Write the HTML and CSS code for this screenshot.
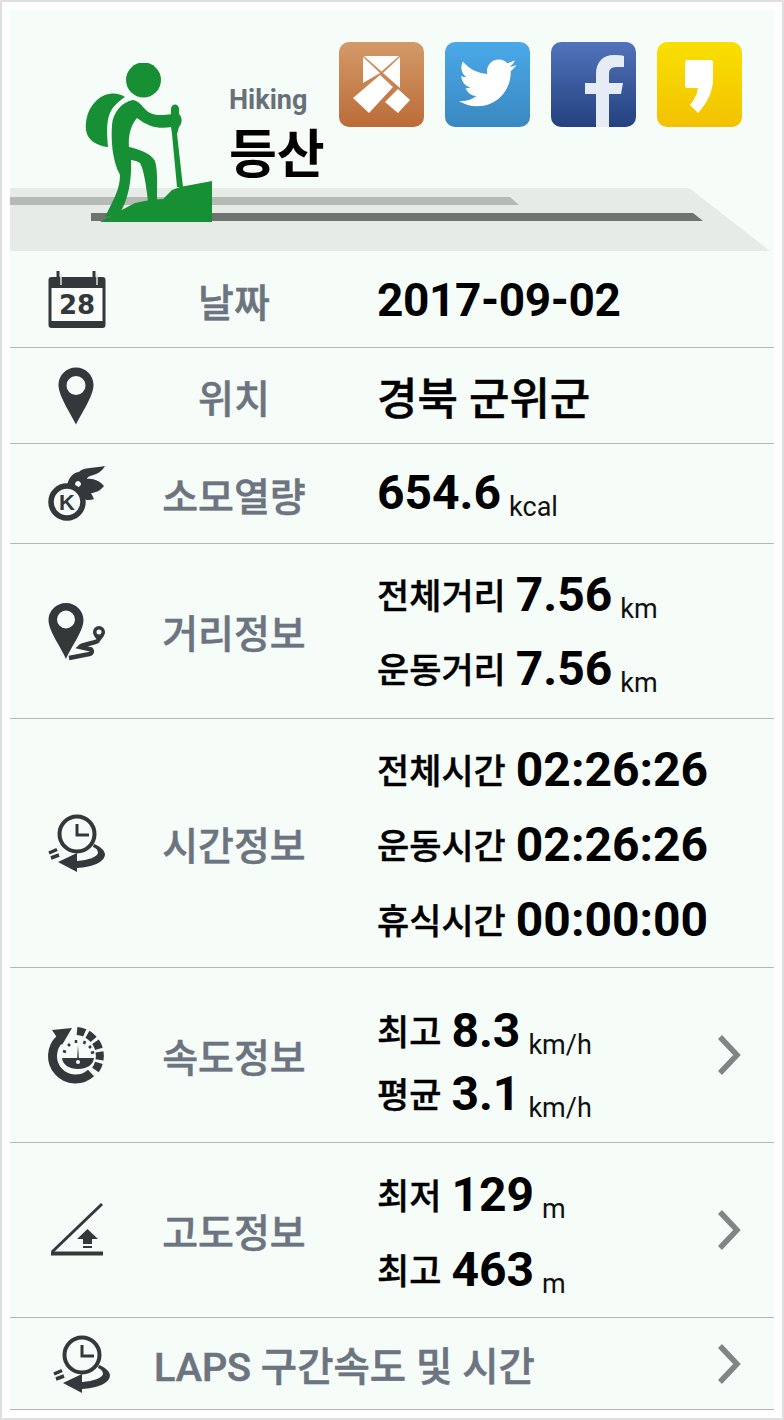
FILE: index.html
```html
<!DOCTYPE html>
<html lang="ko">
<head>
    <meta charset="UTF-8">
    <meta name="viewport" content="width=device-width, initial-scale=1.0">
    <title>등산 기록</title>
    <link rel="stylesheet" href="styles.css">
</head>
<body>
    <svg class="defs" width="0" height="0">
        <symbol id="clockIcon" viewBox="0 0 60 60">
            <circle cx="30" cy="21" r="17.5" fill="none" stroke="#33383a" stroke-width="4"/>
            <path d="M30 11V22H42" fill="none" stroke="#33383a" stroke-width="3"/>
            <path d="M47 31C52 33 57 36 58 41C58 49 46 54 30 55L30 59L11 49L30 40L30 48C42 47 50 44 51 40C51 37 49 35 46 34Z" fill="#33383a"/>
            <path d="M2 40L10 36.5M4 45L12 42" fill="none" stroke="#33383a" stroke-width="3.5"/>
        </symbol>
        <symbol id="chevron" viewBox="0 0 24 40">
            <path d="M3 2L20 20L3 38" fill="none" stroke="#808585" stroke-width="5.5"/>
        </symbol>
    </svg>

    <div class="frame">
        <div class="sheet">
            <!-- Header -->
            <header class="header">
                <svg class="road" width="764" height="64" viewBox="10 188 764 64">
                    <polygon points="10,188 689,188 770,251 10,251" fill="#e7ebe7"/>
                    <polygon points="10,197 510,197 519,205 10,205" fill="#b5bab4"/>
                    <polygon points="91,213 693,213 703,221 91,221" fill="#6e736e"/>
                </svg>
                <svg class="hiker" width="127" height="159" viewBox="85 63 127 159">
                    <circle cx="143.5" cy="80" r="17.5" fill="#178f35"/>
                    <path d="M125 97C118 92 106 92 97 100C88 108 85 120 86 130C87 140 97 146 108 147C107 135 106 122 110 113C113 106 119 101 125 97Z" fill="#178f35"/>
                    <path d="M133 100C139 101 142 106 146 110C151 115 158 116 172 114L172 127C160 129 150 128 137 118C131 125 128 135 129 147C137 149 150 152 155 161C158 170 157 190 157 201L148 201C146 185 144 170 140 163C135 160 131 160 131 160C132 180 128 200 120 213L105 217C113 200 120 190 120 175C112 160 111 140 112 125C113 112 122 102 133 100Z" fill="#178f35"/>
                    <path d="M171 109C171 103 179 103 179 109V114C183 118 182 124 179 127L177 134L183 187H177L172 134L171 127Z" fill="#178f35"/>
                    <path d="M100 222L118 212L135 203L150 200L163 199L172 190L180 187L212 181V222Z" fill="#178f35"/>
                </svg>
                <div class="title">
                    <div class="title-en">Hiking</div>
                    <div class="title-ko">등산</div>
                </div>
                <div class="share">
                    <svg class="share-icon share-band" width="85" height="85" viewBox="0 0 85 85">
                        <polygon points="25,14 60,14 42.5,29.5" fill="#fff"/>
                        <polygon points="24,15 24,41 41,31" fill="#fff"/>
                        <polygon points="61,15 61,46 44,31" fill="#fff"/>
                        <polygon points="14,56 41,33 54,45 30,71" fill="#fff"/>
                        <polygon points="59,47 71,58 59,71 46,60" fill="#fff"/>
                    </svg>
                    <svg class="share-icon share-twitter" width="85" height="85" viewBox="0 0 85 85">
                        <path transform="translate(14 12) scale(2.4)" d="M23.953 4.57a10 10 0 01-2.825.775 4.958 4.958 0 002.163-2.723c-.951.555-2.005.959-3.127 1.184a4.92 4.92 0 00-8.384 4.482C7.69 8.095 4.067 6.13 1.64 3.162a4.822 4.822 0 00-.666 2.475c0 1.71.87 3.213 2.188 4.096a4.904 4.904 0 01-2.228-.616v.06a4.923 4.923 0 003.946 4.827 4.996 4.996 0 01-2.212.085 4.936 4.936 0 004.604 3.417 9.867 9.867 0 01-6.102 2.105c-.39 0-.779-.023-1.17-.067a13.995 13.995 0 007.557 2.209c9.053 0 13.998-7.496 13.998-13.985 0-.21 0-.42-.015-.63A9.935 9.935 0 0024 4.59z" fill="#fff"/>
                    </svg>
                    <svg class="share-icon share-facebook" width="85" height="85" viewBox="0 0 85 85">
                        <path d="M45 85V52H34V41H45V32C45 20 52 13 63 13C67 13 71 13 73 14V25H66C59 25 58 28 58 33V41H72L70 52H58V85Z" fill="#e6ecf5"/>
                    </svg>
                    <svg class="share-icon share-kakao" width="85" height="85" viewBox="0 0 85 85">
                        <path d="M28 20Q28 18 30 18H54Q56 18 56 20V37C56 50 50 61 41 71L33 63C37 58 40 53 41 46H30Q28 46 28 44Z" fill="#fff"/>
                    </svg>
                </div>
            </header>

            <!-- Date -->
            <section class="row row-date">
                <svg class="row-icon" width="60" height="60" viewBox="0 0 60 60">
                    <rect x="1.5" y="7" width="57" height="51" rx="3" fill="#33383a"/>
                    <rect x="4.5" y="18" width="51" height="33" fill="#fbfdfb"/>
                    <path d="M11 1V15M47 1V15" stroke="#33383a" stroke-width="3"/>
                    <path d="M14 4V15M50 4V15" stroke="#dfe3df" stroke-width="1.5"/>
                    <text class="cal-day" x="30" y="44" text-anchor="middle">28</text>
                </svg>
                <div class="row-label">날짜</div>
                <div class="row-value"><span class="num num-date">2017-09-02</span></div>
            </section>

            <!-- Location -->
            <section class="row row-place">
                <svg class="row-icon" width="60" height="60" viewBox="0 0 60 60">
                    <path fill-rule="evenodd" d="M29 1.5C19 1.5 11.5 9.5 11.5 19C11.5 30 24 48 29 58.5C34 48 46.5 30 46.5 19C46.5 9.5 39 1.5 29 1.5ZM29 10A9.5 9.5 0 1 1 29 29A9.5 9.5 0 1 1 29 10Z" fill="#33383a"/>
                </svg>
                <div class="row-label">위치</div>
                <div class="row-value"><span class="place">경북 군위군</span></div>
            </section>

            <!-- Calories -->
            <section class="row row-kcal">
                <svg class="row-icon" width="60" height="60" viewBox="0 0 60 60">
                    <circle cx="20" cy="38" r="16" fill="none" stroke="#33383a" stroke-width="5.5"/>
                    <path fill-rule="evenodd" d="M20 21C22 13 27 8 32 8C34 4 46 4 58 2C55 8 48 11 43 12C41 13 40 14 40 15C46 14 53 17 57 22C53 27 48 29 44 29C45 31 46 33 47 35C42 37 38 36 36 34C33 28 27 23 20 21ZM29 18A2 2 0 1 0 33 22A2 2 0 1 0 29 18Z" fill="#33383a"/>
                    <text class="kcal-k" x="20" y="46" text-anchor="middle">K</text>
                </svg>
                <div class="row-label">소모열량</div>
                <div class="row-value"><span class="num">654.6</span><span class="unit">kcal</span></div>
            </section>

            <!-- Distance -->
            <section class="row row-distance">
                <svg class="row-icon" width="60" height="60" viewBox="0 0 60 60">
                    <path fill-rule="evenodd" d="M19 2C9 2 1.5 10 1.5 19C1.5 30 14 46 19 58C24 46 36.5 30 36.5 19C36.5 10 29 2 19 2ZM19 9.5A9 9 0 1 1 19 27.5A9 9 0 1 1 19 9.5Z" fill="#33383a"/>
                    <path d="M22 57L43 53C46 51 45 48 42 48L33 46C36 43 44 43 51 40" fill="none" stroke="#33383a" stroke-width="4.5"/>
                    <path fill-rule="evenodd" d="M52 25A6 6 0 0 0 46 31C46 35 50 38 52 42C54 38 58 35 58 31A6 6 0 0 0 52 25ZM52 28.5A2.5 2.5 0 1 1 52 33.5A2.5 2.5 0 1 1 52 28.5Z" fill="#33383a"/>
                </svg>
                <div class="row-label">거리정보</div>
                <div class="row-value row-lines">
                    <div class="line line-74"><span class="line-name">전체거리</span><span class="num">7.56</span><span class="unit">km</span></div>
                    <div class="line line-74"><span class="line-name">운동거리</span><span class="num">7.56</span><span class="unit">km</span></div>
                </div>
            </section>

            <!-- Time -->
            <section class="row row-time">
                <svg class="row-icon" width="60" height="60"><use href="#clockIcon"/></svg>
                <div class="row-label">시간정보</div>
                <div class="row-value row-lines">
                    <div class="line line-75"><span class="line-name">전체시간</span><span class="num">02:26:26</span></div>
                    <div class="line line-75"><span class="line-name">운동시간</span><span class="num">02:26:26</span></div>
                    <div class="line line-75"><span class="line-name">휴식시간</span><span class="num">00:00:00</span></div>
                </div>
            </section>

            <!-- Speed -->
            <section class="row row-speed">
                <svg class="row-icon" width="60" height="60" viewBox="0 0 60 60">
                    <path d="M44 48A23 23 0 1 1 13 14" fill="none" stroke="#33383a" stroke-width="9"/>
                    <polygon points="25,3 5,5 15,20" fill="#33383a"/>
                    <path d="M30 6A25 25 0 0 1 47 47" fill="none" stroke="#33383a" stroke-width="8" stroke-dasharray="8 3"/>
                    <path d="M15 33H47C46 40 40 44 31 44C22 44 16 40 15 33Z" fill="#33383a"/>
                    <path d="M31 20L30 36H32Z" fill="#33383a"/>
                    <circle cx="31" cy="37" r="2" fill="#fbfdfb"/>
                    <path d="M16 26L19 27M21 19L23 21M29 15V18M38 16L37 19M44 21L42 23M47 27L44 28" stroke="#33383a" stroke-width="2.5"/>
                </svg>
                <div class="row-label">속도정보</div>
                <div class="row-value row-lines row-lines-low">
                    <div class="line line-63"><span class="line-name">최고</span><span class="num">8.3</span><span class="unit">km/h</span></div>
                    <div class="line line-63"><span class="line-name">평균</span><span class="num">3.1</span><span class="unit">km/h</span></div>
                </div>
                <svg class="chevron" width="24" height="40"><use href="#chevron"/></svg>
            </section>

            <!-- Altitude -->
            <section class="row row-altitude">
                <svg class="row-icon" width="60" height="60" viewBox="0 0 60 60">
                    <path d="M5 52L55 4" fill="none" stroke="#33383a" stroke-width="3"/>
                    <path d="M4 53.5H56" fill="none" stroke="#33383a" stroke-width="4"/>
                    <path d="M40.5 29L51 39H45V44H36V39H30Z" fill="#33383a"/>
                    <rect x="36" y="46" width="9" height="2" fill="#33383a"/>
                </svg>
                <div class="row-label">고도정보</div>
                <div class="row-value row-lines row-lines-alt">
                    <div class="line line-75"><span class="line-name">최저</span><span class="num">129</span><span class="unit">m</span></div>
                    <div class="line line-75"><span class="line-name">최고</span><span class="num">463</span><span class="unit">m</span></div>
                </div>
                <svg class="chevron" width="24" height="40"><use href="#chevron"/></svg>
            </section>

            <!-- Laps -->
            <section class="row row-laps">
                <svg class="row-icon" width="60" height="60"><use href="#clockIcon"/></svg>
                <div class="laps-label">LAPS 구간속도 및 시간</div>
                <svg class="chevron" width="24" height="40"><use href="#chevron"/></svg>
            </section>
        </div>
    </div>
</body>
</html>
```

FILE: styles.css
```css
html, body {
    margin: 0;
    padding: 0;
    background-color: #fff;
}
body {
    font-family: Roboto, "Noto Sans CJK KR", sans-serif;
    color: #000;
}
.defs {
    display: block;
    height: 0;
}
.frame {
    box-sizing: border-box;
    width: 784px;
    height: 1420px;
    padding: 8px;
    border: 2px solid #dfdfdf;
    overflow: hidden;
}
.sheet {
    background-color: #f6fcf7;
    height: 1400px;
}

/* Header */
.header {
    position: relative;
    display: flex;
    align-items: flex-start;
    height: 242px;
}
.road {
    position: absolute;
    left: 0;
    bottom: 0;
}
.hiker {
    position: relative;
    flex: none;
    margin: 53px 0 0 75px;
}
.title {
    position: relative;
    flex: none;
    margin: 71px 0 0 17px;
}
.title-en {
    font-size: 27px;
    line-height: 38px;
    font-weight: 700;
    color: #687079;
}
.title-ko {
    font-size: 52px;
    line-height: 74px;
    font-weight: 700;
}
.share {
    display: flex;
    gap: 21px;
    margin: 32px 32px 0 auto;
}
.share-icon {
    display: block;
    border-radius: 10px;
}
.share-band {
    background: linear-gradient(#d39a68, #bb6c38);
}
.share-twitter {
    background: linear-gradient(#4aa9e8, #3a88c0);
}
.share-facebook {
    background: linear-gradient(#5173bb, #24417f);
}
.share-kakao {
    background: linear-gradient(#f9e000, #f2c200);
}

/* Rows */
.row {
    box-sizing: border-box;
    display: grid;
    grid-template-columns: 134px 180px 1fr auto;
    align-items: center;
    border-bottom: 1px solid #b4b8b4;
    padding-right: 33px;
}
.row-date, .row-place {
    height: 96px;
}
.row-kcal {
    height: 100px;
}
.row-distance, .row-speed, .row-altitude {
    height: 175px;
}
.row-time {
    height: 249px;
}
.row-laps {
    height: 92px;
    grid-template-columns: 144px 1fr auto;
}
.row-icon {
    display: block;
    justify-self: center;
}
.row-label {
    text-align: center;
    font-size: 39px;
    font-weight: 500;
    color: #6b7480;
    -webkit-text-stroke: 0.5px #6b7480;
}
.laps-label {
    font-size: 39.5px;
    font-weight: 500;
    color: #6b7480;
    -webkit-text-stroke: 0.6px #6b7480;
}
.row-value {
    padding-left: 53px;
}
.row-lines {
    padding-top: 2px;
}
.row-lines-low {
    padding-top: 14px;
}
.row-lines-alt {
    padding-top: 4px;
}
.line-63 {
    height: 63px;
    line-height: 63px;
}
.line-74 {
    height: 74px;
    line-height: 74px;
}
.line-75 {
    height: 75px;
    line-height: 75px;
}
.line-name {
    font-size: 35px;
    font-weight: 500;
    margin-right: 10px;
    vertical-align: 2px;
    -webkit-text-stroke: 0.4px #000;
}
.num {
    font-size: 48px;
    font-weight: 700;
}
.num-date {
    font-size: 46px;
    letter-spacing: -0.4px;
}
.place {
    font-size: 44px;
    font-weight: 500;
    -webkit-text-stroke: 0.5px #000;
}
.unit {
    font-size: 27px;
    margin-left: 8px;
    color: #111;
    vertical-align: -7px;
}
.chevron {
    display: block;
}
.cal-day {
    font-family: "DejaVu Sans", sans-serif;
    font-size: 26px;
    font-weight: 700;
    fill: #33383a;
}
.kcal-k {
    font-family: "Liberation Sans", sans-serif;
    font-size: 22px;
    font-weight: 700;
    fill: #33383a;
}
```
